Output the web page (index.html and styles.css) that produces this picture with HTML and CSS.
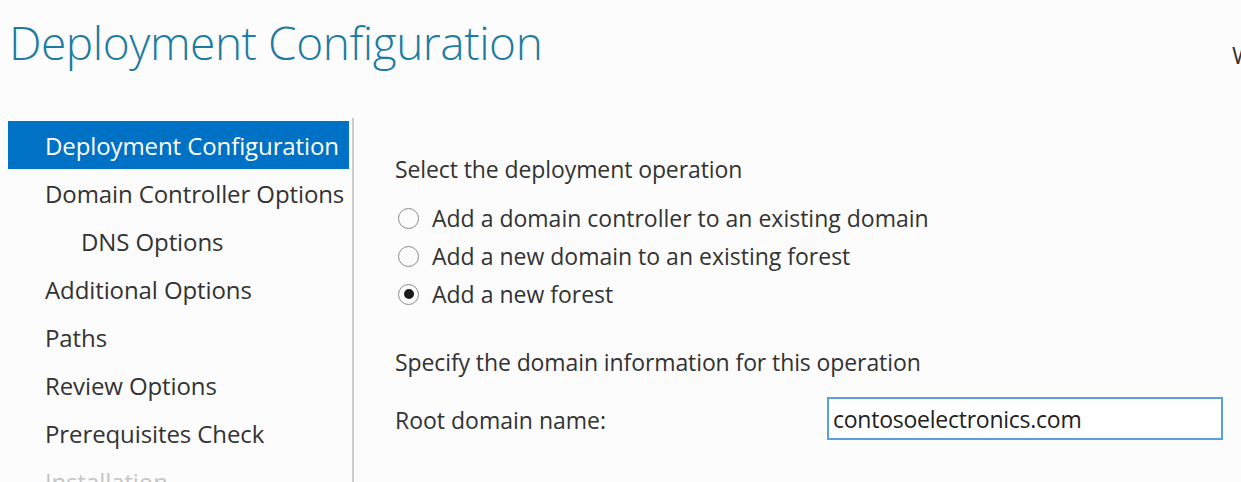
FILE: index.html
```html
<!DOCTYPE html>
<html lang="en">
<head>
<meta charset="utf-8">
<title>Deployment Configuration</title>
<link rel="stylesheet" href="styles.css">
</head>
<body>
<div class="page">
  <header class="header">
    <h1 class="title">Deployment Configuration</h1>
    <div class="target">WIN-SRV01</div>
  </header>
  <div class="main">
    <nav class="nav">
      <div class="nav-item active">Deployment Configuration</div>
      <div class="nav-item">Domain Controller Options</div>
      <div class="nav-item sub">DNS Options</div>
      <div class="nav-item">Additional Options</div>
      <div class="nav-item">Paths</div>
      <div class="nav-item">Review Options</div>
      <div class="nav-item">Prerequisites Check</div>
      <div class="nav-item disabled">Installation</div>
    </nav>
    <div class="sep"></div>
    <section class="content">
      <div class="label first">Select the deployment operation</div>
      <div class="radios">
        <label class="radio"><span class="dot"></span>Add a domain controller to an existing domain</label>
        <label class="radio"><span class="dot"></span>Add a new domain to an existing forest</label>
        <label class="radio"><span class="dot checked"></span>Add a new forest</label>
      </div>
      <div class="label second">Specify the domain information for this operation</div>
      <div class="field">
        <span class="field-label">Root domain name:</span>
        <div class="input">contosoelectronics.com</div>
      </div>
    </section>
  </div>
</div>
</body>
</html>
```
FILE: styles.css
```css
html, body {
  margin: 0;
  padding: 0;
  background: #fcfcfc;
  overflow: hidden;
}
body {
  font-family: "Open Sans", "Noto Sans", "Liberation Sans", sans-serif;
  color: #333333;
  width: 1241px;
  height: 482px;
}
.page {
  width: 1241px;
  height: 482px;
  overflow: hidden;
}
.header {
  display: flex;
  height: 121px;
}
.title {
  width: 1223px;
  flex: none;
  margin: 10px 0 0 9px;
  font-size: 46px;
  font-weight: 300;
  line-height: 64px;
  color: #1e7ca2;
  letter-spacing: -0.45px;
  white-space: nowrap;
}
.target {
  flex: none;
  margin-top: 38px;
  font-size: 24px;
  line-height: 34px;
  color: #333;
  white-space: nowrap;
}
.main {
  display: flex;
  height: 361px;
}
.nav {
  width: 341px;
  margin-left: 8px;
  flex: none;
}
.nav-item {
  height: 46px;
  line-height: 46px;
  padding-top: 2px;
  padding-left: 37px;
  font-size: 24px;
  color: #333333;
  white-space: nowrap;
  letter-spacing: -0.1px;
}
.nav-item.sub {
  padding-left: 73px;
}
.nav-item.active {
  background: #0072c6;
  color: #ffffff;
}
.nav-item.disabled {
  color: #c6c6c6;
}
.sep {
  width: 2px;
  margin-left: 3px;
  margin-top: -3px;
  background: #cdcdcd;
  flex: none;
}
.content {
  padding-left: 41px;
  flex: 1;
}
.label {
  height: 38px;
  line-height: 38px;
  font-size: 23px;
  white-space: nowrap;
  letter-spacing: -0.1px;
}
.label.first {
  margin-top: 29px;
}
.label.second {
  margin-top: 30px;
}
.radios {
  margin-top: 11px;
  display: flex;
  flex-direction: column;
}
.radio {
  height: 38px;
  display: flex;
  align-items: center;
  font-size: 23px;
  white-space: nowrap;
}
.dot {
  width: 19px;
  height: 19px;
  border: 1.5px solid #8a8a8a;
  border-radius: 50%;
  margin-left: 3px;
  margin-right: 13px;
  display: inline-flex;
  align-items: center;
  justify-content: center;
  background: #fcfcfc;
  box-sizing: content-box;
  flex: none;
}
.dot.checked::after {
  content: "";
  width: 10px;
  height: 10px;
  border-radius: 50%;
  background: #1a1a1a;
}
.field {
  margin-top: 16px;
  display: flex;
  align-items: center;
}
.field-label {
  width: 432px;
  flex: none;
  padding-top: 3px;
  font-size: 23px;
  white-space: nowrap;
}
.input {
  width: 388px;
  height: 39px;
  border: 2px solid #5a9fe0;
  background: #ffffff;
  box-sizing: content-box;
  padding-left: 4px;
  line-height: 41px;
  font-size: 23px;
  letter-spacing: -0.25px;
  color: #222;
  white-space: nowrap;
}
```
